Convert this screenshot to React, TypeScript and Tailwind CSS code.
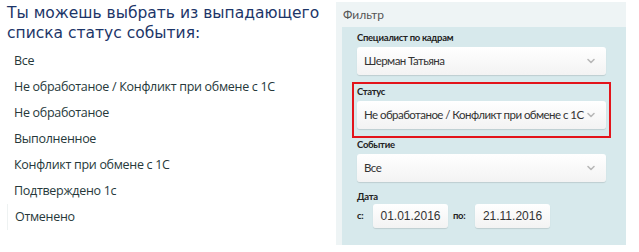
import { ChevronDown } from 'lucide-react';

const items = [
  'Все',
  'Не обработаное / Конфликт при обмене с 1С',
  'Не обработаное',
  'Выполненное',
  'Конфликт при обмене с 1С',
  'Подтверждено 1с',
  'Отменено',
];

function Select({ value }: { value: string }) {
  return (
    <div className="flex h-[28px] items-center justify-between rounded-[3px] bg-gradient-to-b from-white to-[#f3f3f3] pl-[7px] pr-[9px] shadow-[0_1px_1px_rgba(0,0,0,0.12)]">
      <span className="whitespace-nowrap font-['Lato',sans-serif] text-[11.5px] tracking-[-0.55px] text-[#333]">{value}</span>
      <ChevronDown size={12} strokeWidth={3.2} className="shrink-0 text-[#b8b8b8]" />
    </div>
  );
}

function DateBox({ value }: { value: string }) {
  return (
    <div className="flex h-[24px] w-[75px] items-center justify-center rounded-[3px] bg-gradient-to-b from-white to-[#f3f3f3] shadow-[0_1px_1px_rgba(0,0,0,0.12)] font-['Liberation_Sans',sans-serif] text-[12px] text-[#333]">
      {value}
    </div>
  );
}

const label = "font-['Lato',sans-serif] text-[9.5px] font-bold leading-[14px] tracking-[-0.3px] text-[#222]";

export default function App() {
  return (
    <div className="flex h-[252px] w-[639px] bg-white font-['Open_Sans',sans-serif]">
      {/* left: explanation + list of statuses */}
      <div className="w-[336px] pl-[7px] pt-[3px]">
        <p className="font-['DejaVu_Sans',sans-serif] text-[15.5px] leading-[20px] text-[#1c3568]">
          Ты можешь выбрать из выпадающего списка статус события:
        </p>
        <ul className="mt-[5px] w-[310px]">
          {items.map((it, i) => (
            <li
              key={it}
              className={
                'flex h-[26px] items-center pl-[7px] text-[12.5px] tracking-[-0.3px] text-[#26383a] ' +
                (i === items.length - 1 ? 'border-l border-[#eef2f2]' : '')
              }
            >
              {it}
            </li>
          ))}
        </ul>
      </div>

      {/* right: filter panel */}
      <div className="mt-[2px] mb-[7px] w-[290px] bg-[#eef4f5] pl-[6px]">
        <div className="flex h-[25px] items-center pl-[1px] font-['Lato',sans-serif] text-[12px] text-[#555]">Фильтр</div>
        <div className="h-[218px] bg-[#d7e9ec] pl-[15px] pr-[20px] pt-[4px]">
          <div className={label}>Специалист по кадрам</div>
          <div className="mt-[2px]">
            <Select value="Шерман Татьяна" />
          </div>

          <div className="-mx-[5px] mt-[7px] border-2 border-[#e3141b] px-[3px] pb-[7px] pt-[1px]">
            <div className={label}>Статус</div>
            <div className="mt-[2px]">
              <Select value="Не обработаное / Конфликт при обмене с 1С" />
            </div>
          </div>

          <div className={'mt-0 ' + label}>Событие</div>
          <div className="mt-[2px]">
            <Select value="Все" />
          </div>

          <div className={'mt-[8px] ' + label}>Дата</div>
          <div className="flex items-center">
            <span className={'w-[16px] ' + label}>с:</span>
            <DateBox value="01.01.2016" />
            <span className={'ml-[5px] w-[22px] ' + label}>по:</span>
            <DateBox value="21.11.2016" />
          </div>
        </div>
      </div>
    </div>
  );
}
